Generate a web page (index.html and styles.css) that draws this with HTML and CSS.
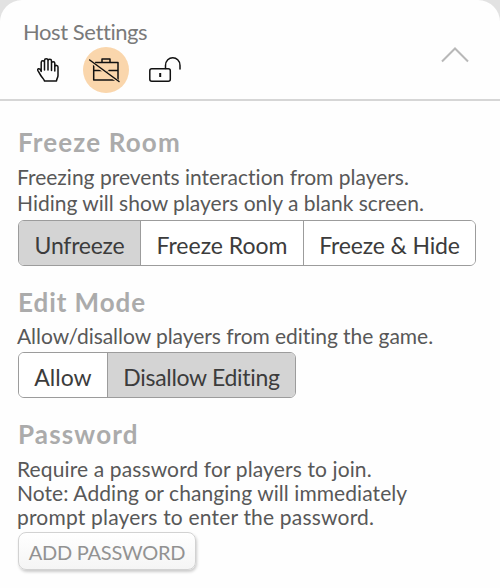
FILE: index.html
```
<!DOCTYPE html>
<html lang="en">
<head>
<meta charset="utf-8">
<title>Host Settings</title>
<link rel="stylesheet" href="styles.css">
</head>
<body>
<main class="panel">
  <header class="header">
    <div>
      <h1 class="title">Host Settings</h1>
      <div class="icons">
        <span class="icon"><svg width="46" height="46" viewBox="0 1 46 46"><path d="M16.200 25.500V16.500c0-2.300 3.300-2.300 3.300 0v7.500M19.500 24V14.500c0-2.300 3.500-2.300 3.500 0v9.500M23 15c0-2.300 3.500-2.300 3.500 0v9.500M26.500 17.200c0-2.100 3.300-2.100 3.300 0v7.800M29.800 20.500c.4-1.700 3.200-1.400 3.200.5v8.500c0 2.200-1.300 3-1.500 5.500H19.500c-.7-2.500-2.400-3.300-3.700-5.500l-2.900-4.900c-1-2 1.600-2.700 2.600-.8l.7 1.700"/></svg></span>
        <span class="icon active"><svg width="46" height="46" viewBox="0 1 46 46"><path d="M12.500 16.500h22.500v17.500H10.700V18M19 16.500v-3.500h8v3.500M10.700 24.500h8.300M26 24.500h9M22 26h2"/><path class="gap" d="M7.500 15.200L36.500 36.200"/><path d="M6.700 14L36 35.500"/></svg></span>
        <span class="icon"><svg width="46" height="46" viewBox="0 1 46 46"><rect x="8.800" y="22.800" width="20.500" height="12.400" rx="2"/><path d="M24.500 22.500v-3c0-10.300 14.500-10.300 14.500 0v3.500"/><path class="key" d="M19.200 27v4"/></svg></span>
      </div>
    </div>
    <svg class="chevron" width="30" height="18" viewBox="0 0 30 18"><path d="M2 15.500L15 2.500L28 15.500"/></svg>
  </header>
  <section class="section freeze">
    <h2>Freeze Room</h2>
    <p><span>Freezing prevents interaction from players.</span><br><span>Hiding will show players only a blank screen.</span></p>
    <div class="group">
      <button class="selected unfreeze">Unfreeze</button><button class="freeze-room">Freeze Room</button><button class="freeze-hide">Freeze &amp; Hide</button>
    </div>
  </section>
  <section class="section edit">
    <h2>Edit Mode</h2>
    <p>Allow/disallow players from editing the game.</p>
    <div class="group">
      <button class="allow">Allow</button><button class="selected disallow">Disallow Editing</button>
    </div>
  </section>
  <section class="section password">
    <h2>Password</h2>
    <p><span class="wide">Require a password for players to join.</span><br><span class="note">Note: Adding or changing will immediately</span><br><span class="wider">prompt players to enter the password.</span></p>
    <button class="add">ADD PASSWORD</button>
  </section>
</main>
</body>
</html>
```
FILE: styles.css
```
* { box-sizing: border-box; }
body {
  margin: 0;
  background: #e2e2e2;
  font-family: "Gill Sans", Lato, sans-serif;
  font-variant-ligatures: none;
  color: #585858;
}
.panel {
  height: 588px;
  background: #fefefe;
  border-radius: 22px 22px 0 0;
  overflow: hidden;
}
.header {
  display: flex;
  justify-content: space-between;
  height: 101px;
  padding: 19px 30px 0 23px;
  border-bottom: 2px solid #d6d6d6;
}
.title {
  margin: 0;
  font-size: 22px;
  font-weight: 400;
  line-height: 26px;
  letter-spacing: -0.42px;
  color: #7a7a7a;
}
.icons {
  display: flex;
  gap: 12px;
  margin: 2px 0 0 1.5px;
}
.icon {
  width: 46px;
  height: 46px;
  border-radius: 50%;
}
.active { background: #fad6ac; }
svg {
  display: block;
  fill: none;
  stroke: #111;
  stroke-width: 1.5;
  stroke-linecap: round;
  stroke-linejoin: round;
}
.gap { stroke: #fad6ac; stroke-width: 3; }
.key { stroke-width: 2; stroke-linecap: butt; }
.chevron {
  margin-top: 27px;
  stroke: #b8b8b8;
  stroke-width: 2;
  stroke-linecap: butt;
  stroke-linejoin: miter;
}
.section { padding: 0 18px; }
.freeze { padding-top: 25px; }
.edit { padding-top: 20px; }
.password { padding-top: 20px; }
h2 {
  margin: 0;
  font-size: 26px;
  font-weight: 700;
  line-height: 32px;
  letter-spacing: 1.15px;
  color: #ababab;
}
.edit h2 { letter-spacing: 0.95px; }
p {
  margin: 6px 0 4px -1px;
  font-size: 21px;
  line-height: 26px;
  white-space: nowrap;
}
.edit p { margin: 5px 0 3px -1px; letter-spacing: -0.05px; }
.password p { margin: 7px 0 3px -1px; line-height: 24px; }
.wide { letter-spacing: 0.12px; }
.note { letter-spacing: 0.07px; }
.wider { letter-spacing: 0.19px; }
button {
  padding: 0;
  font: inherit;
  white-space: nowrap;
}
.group {
  display: flex;
  width: max-content;
  height: 46px;
  border: 1px solid #9c9c9c;
  border-radius: 6px;
  overflow: hidden;
}
.group button {
  height: 44px;
  border: 0;
  background: #fff;
  font-size: 23px;
  line-height: 28px;
  padding-top: 3px;
  color: #3c3c3c;
}
.group button + button { border-left: 1px solid #9c9c9c; }
.group .selected { background: #d4d4d4; }
.group .unfreeze { width: 121px; letter-spacing: -0.25px; }
.group .freeze-room { width: 163px; }
.group .freeze-hide { width: 172px; letter-spacing: -0.15px; }
.group .allow { width: 88px; }
.group .disallow { width: 188px; letter-spacing: -0.3px; }
.add {
  display: block;
  width: 178px;
  height: 38px;
  border: 1px solid #d2d2d2;
  border-radius: 8px;
  background: linear-gradient(#fff, #f5f5f5);
  box-shadow: 1px 2px 3px rgba(0, 0, 0, .2);
  font-size: 20px;
  line-height: 24px;
  padding-top: 2px;
  letter-spacing: -0.25px;
  color: #929292;
}
```
